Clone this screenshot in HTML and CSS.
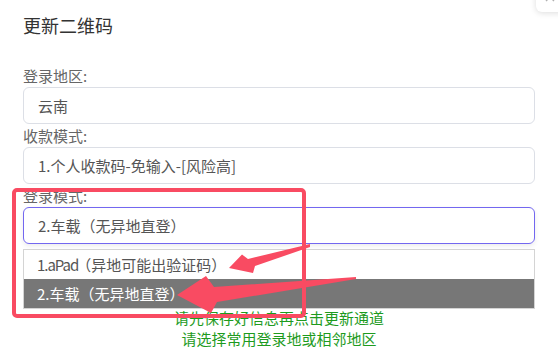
FILE: index.html
```html
<!DOCTYPE html>
<html lang="zh-CN">
<head>
<meta charset="utf-8">
<title>更新二维码</title>
<link rel="stylesheet" href="styles.css">
</head>
<body>
<div class="dialog">
  <div class="corner">
    <svg class="corner-x" viewBox="0 0 10 10" width="10" height="10">
      <path d="M1 1 L9 9 M9 1 L1 9" stroke="#b0b0b0" stroke-width="1.4" fill="none"/>
    </svg>
  </div>
  <h2 class="title">更新二维码</h2>
  <div class="form">
    <div class="label">登录地区:</div>
    <div class="field">云南</div>
    <div class="label">收款模式:</div>
    <div class="field">1.个人收款码-免输入-[风险高]</div>
    <div class="label">登录模式:</div>
    <div class="field field-focus">2.车载（无异地直登）</div>
    <ul class="options">
      <li class="option"><span class="latin">1.aPad</span>（异地可能出验证码）</li>
      <li class="option option-active">2.车载（无异地直登）</li>
    </ul>
    <p class="hint">请先保存好信息再点击更新通道<br>请选择常用登录地或相邻地区</p>
  </div>
  <div class="mark-box"></div>
  <svg class="arrows" viewBox="0 0 558 355" width="558" height="355">
    <polygon class="arrow" points="310,244 248,259 242,254.5 229,268 253,273 255,266 310,247"/>
    <polygon class="arrow" points="356,277 214,287 206,276 177,295 211,313 217,302 356,279"/>
  </svg>
</div>
</body>
</html>
```
FILE: styles.css
```css
body {
  margin: 0;
  background: #fff;
  font-family: "Noto Sans CJK SC", "Noto Sans", sans-serif;
}

.dialog {
  position: relative;
  width: 558px;
  height: 355px;
  box-sizing: border-box;
  padding: 12px 23px 0;
  overflow: hidden;
}

.corner {
  position: absolute;
  top: -20px;
  right: -10px;
  width: 32px;
  height: 32px;
  background: #fff;
  border-radius: 6px;
  box-shadow: 0 1px 6px rgba(0, 0, 0, 0.14);
  overflow: hidden;
}

.corner-x {
  position: absolute;
  left: 9px;
  top: 12px;
}

.title {
  margin: 0;
  font-size: 18px;
  font-weight: normal;
  line-height: 26px;
  color: #333;
}

.form {
  margin-top: 26px;
  display: flex;
  flex-direction: column;
}

.label {
  font-size: 15px;
  line-height: 23px;
  color: #666;
}

.field {
  height: 37px;
  box-sizing: border-box;
  border: 1px solid #dcdfe6;
  border-radius: 6px;
  padding: 0 14px;
  display: flex;
  align-items: center;
  font-size: 15px;
  color: #555;
}

.field-focus {
  border-color: #7367f0;
  box-shadow: 0 2px 5px rgba(0, 0, 0, 0.08);
}

.options {
  list-style: none;
  margin: 5px 0 0;
  padding: 0;
  border: 1px solid #d4d4d4;
}

.option {
  height: 29px;
  padding-left: 13px;
  display: flex;
  align-items: center;
  font-size: 15px;
  color: #555;
}

.latin {
  letter-spacing: -0.07em;
  margin-right: -2px;
}

.option-active {
  background: #777;
  color: #fff;
}

.hint {
  margin: -2px 0 0;
  text-align: center;
  font-size: 15px;
  line-height: 21px;
  color: #1e9b1e;
}

.mark-box {
  position: absolute;
  left: 12px;
  top: 188px;
  width: 294px;
  height: 130px;
  box-sizing: border-box;
  border: 4px solid #f94b62;
  border-radius: 5px;
}

.arrows {
  position: absolute;
  left: 0;
  top: 0;
  pointer-events: none;
}

.arrow {
  fill: #f94b62;
}
```
